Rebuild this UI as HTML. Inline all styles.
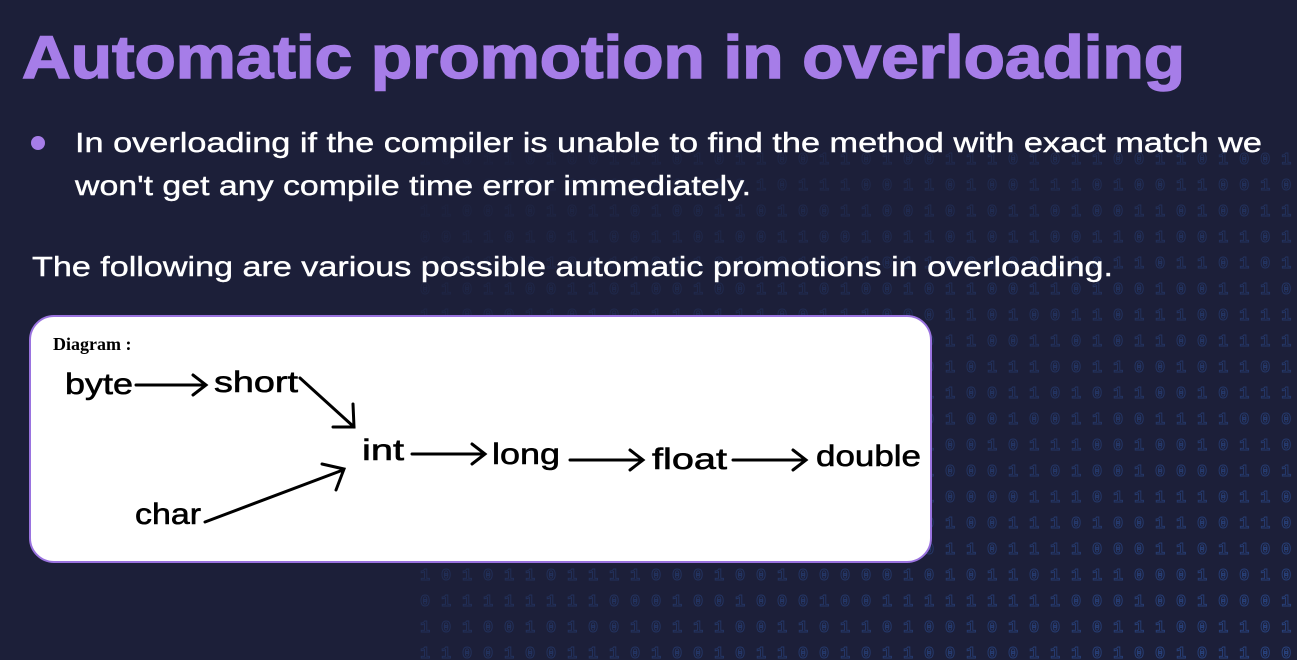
<!DOCTYPE html>
<html><head><meta charset="utf-8"><style>
html,body{margin:0;padding:0;background:#1c1f39;}
svg{display:block}
</style></head><body>
<svg width="1297" height="660" viewBox="0 0 1297 660" xmlns="http://www.w3.org/2000/svg">
<defs>
<linearGradient id="fade" x1="0" y1="0" x2="1" y2="1">
<stop offset="0" stop-color="#1c1f39" stop-opacity="1"/>
<stop offset="0.4" stop-color="#1c1f39" stop-opacity="0.65"/>
<stop offset="1" stop-color="#1c1f39" stop-opacity="0"/>
</linearGradient>
</defs>
<rect width="1297" height="660" fill="#1c1f39"/>
<g font-family="Liberation Mono, monospace" font-size="17" font-weight="bold" fill="none" stroke="#2b4a8c" stroke-width="0.9" opacity="0.85" letter-spacing="10.8">
<text x="420" y="164">100110100111010110011010011101011001101001</text>
<text x="420" y="190">011001110100110010111001101001110100110010</text>
<text x="420" y="216">110010101101001101001100101011010011010011</text>
<text x="420" y="242">001101011001101001100101101011001101001101</text>
<text x="420" y="268">101100100110110110101101100100110110110101</text>
<text x="420" y="294">010110011010010011101001011001101001001110</text>
<text x="420" y="320">110001101001101110011100011010011011100111</text>
<text x="420" y="346">011011001101011001111011011001101011001111</text>
<text x="420" y="372">100101110011001011010010010111001100101101</text>
<text x="420" y="398">001110011010110010111001110011010110010111</text>
<text x="420" y="424">110100100110011110001111010010011001111000</text>
<text x="420" y="450">011001011100100101100001100101110010010110</text>
<text x="420" y="476">101000110100100001010010100011010010000101</text>
<text x="420" y="502">001000011101111101100100100001110111110110</text>
<text x="420" y="528">110100111010011001100011010011101001100110</text>
<text x="420" y="554">010110111100011011000101011011110001101100</text>
<text x="420" y="580">101011011110001001000001010110111100010010</text>
<text x="420" y="606">011111111000100100010011111111100010010001</text>
<text x="420" y="632">101001010010111001101101001010010111001101</text>
<text x="420" y="658">110010011101001011001011001001110100101100</text>
</g>
<rect x="380" y="130" width="917" height="530" fill="url(#fade)"/>

<text x="22" y="78" font-family="Liberation Sans, sans-serif" font-weight="bold" font-size="60" fill="#a67de8" stroke="#a67de8" stroke-width="1.5" textLength="1163" lengthAdjust="spacingAndGlyphs">Automatic promotion in overloading</text>
<circle cx="38" cy="143" r="7" fill="#a67de8"/>
<g font-family="Liberation Sans, sans-serif" font-size="28" fill="#ffffff" stroke="#ffffff" stroke-width="0.4">
<text x="75" y="152" textLength="1187" lengthAdjust="spacingAndGlyphs">In overloading if the compiler is unable to find the method with exact match we</text>
<text x="75" y="195" textLength="676" lengthAdjust="spacingAndGlyphs">won't get any compile time error immediately.</text>
<text x="32" y="276" textLength="1081" lengthAdjust="spacingAndGlyphs">The following are various possible automatic promotions in overloading.</text>
</g>

<rect x="30" y="316" width="901" height="246" rx="24" fill="#ffffff" stroke="#9a73df" stroke-width="2"/>
<text x="53" y="350" font-family="Liberation Serif, serif" font-weight="bold" font-size="18" fill="#000">Diagram :</text>
<g font-family="Liberation Sans, sans-serif" font-size="30" fill="#000" stroke="#000" stroke-width="0.6">
<text x="65" y="394" textLength="68" lengthAdjust="spacingAndGlyphs">byte</text>
<text x="214" y="392" textLength="84" lengthAdjust="spacingAndGlyphs">short</text>
<text x="362" y="460" textLength="42" lengthAdjust="spacingAndGlyphs">int</text>
<text x="492" y="464" textLength="68" lengthAdjust="spacingAndGlyphs">long</text>
<text x="652" y="469" textLength="75" lengthAdjust="spacingAndGlyphs">float</text>
<text x="816" y="466" textLength="105" lengthAdjust="spacingAndGlyphs">double</text>
<text x="135" y="524" textLength="66" lengthAdjust="spacingAndGlyphs">char</text>
</g>
<g stroke="#000" stroke-width="3" fill="none" stroke-linecap="round">
<path d="M136 385 H204 M193 375 L206 385 L193 395"/>
<path d="M300 378 L354 427 M353 404 L354 427 L333 427"/>
<path d="M205 522 L343 470 M322 464 L344 469 L336 490"/>
<path d="M412 454 H482 M472 444 L485 454 L472 464"/>
<path d="M570 460 H640 M630 450 L643 460 L630 470"/>
<path d="M733 460 H803 M793 450 L806 460 L793 470"/>
</g>
</svg>
</body></html>
